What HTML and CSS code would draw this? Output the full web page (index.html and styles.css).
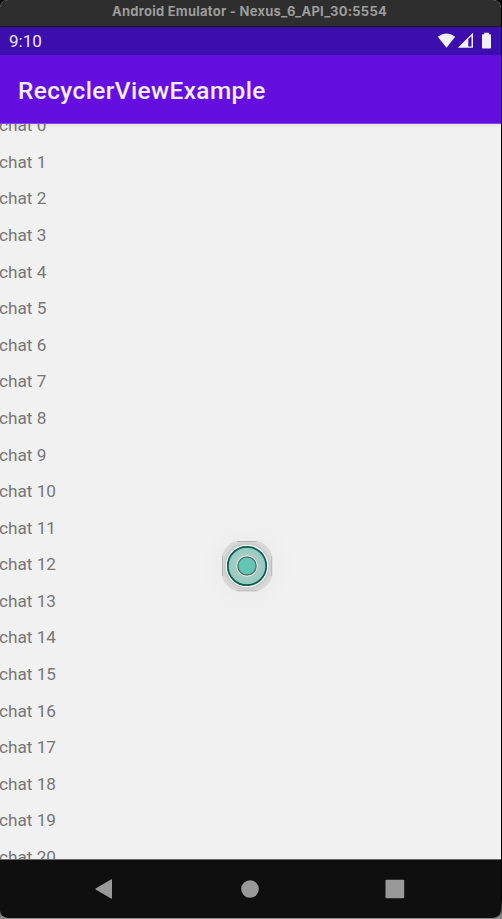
FILE: index.html
```
<!DOCTYPE html>
<html lang="en">

<head>
    <meta charset="UTF-8">
    <meta name="viewport" content="width=device-width, initial-scale=1.0">
    <title>RecyclerViewExample</title>
    <link rel="stylesheet" href="styles.css">
</head>

<body>
    <div class="emulator">
        <div class="window-title">Android Emulator - Nexus_6_API_30:5554</div>
        <div class="status-bar">
            <span class="clock">9:10</span>
            <svg class="status-icons" width="56" height="18" viewBox="0 0 56 18">
                <path fill="#f1f0f5" d="M0.8 4.8 Q9.5 -2 18.2 4.8 L9.5 15.7 Z" />
                <path fill="#f1f0f5" fill-rule="evenodd" d="M20.8 15.8 L36 0.8 V15.8 Z M31.3 7 V14.5 H34.5 V4.2 Z" />
                <path fill="#f1f0f5" d="M47.2 0.7 H52 V2.2 H53 Q54 2.2 54 3.2 V15.4 Q54 16.5 53 16.5 H46 Q45 16.5 45 15.4 V3.2 Q45 2.2 46 2.2 H47.2 Z" />
            </svg>
        </div>
        <h1 class="app-bar">RecyclerViewExample</h1>
        <div class="recycler">
            <ul class="chat-list">
                <li>chat 0</li>
                <li>chat 1</li>
                <li>chat 2</li>
                <li>chat 3</li>
                <li>chat 4</li>
                <li>chat 5</li>
                <li>chat 6</li>
                <li>chat 7</li>
                <li>chat 8</li>
                <li>chat 9</li>
                <li>chat 10</li>
                <li>chat 11</li>
                <li>chat 12</li>
                <li>chat 13</li>
                <li>chat 14</li>
                <li>chat 15</li>
                <li>chat 16</li>
                <li>chat 17</li>
                <li>chat 18</li>
                <li>chat 19</li>
                <li>chat 20</li>
            </ul>
        </div>
        <div class="nav-bar">
            <svg width="20" height="22" viewBox="0 0 20 22">
                <path fill="#999" d="M1.6 10.4 Q1 11 1.6 11.6 L17 20.6 Q18 21 18 20 V2 Q18 1 17 1.4 Z" />
            </svg>
            <svg width="18" height="18" viewBox="0 0 18 18">
                <circle fill="#999" cx="9" cy="9" r="8.8" />
            </svg>
            <svg width="20" height="20" viewBox="0 0 20 20">
                <rect fill="#999" x="0.5" y="0.8" width="18.7" height="18.5" rx="1" />
            </svg>
        </div>
        <!-- touch pointer over the list -->
        <svg class="pointer" width="120" height="120" viewBox="0 0 120 120">
            <defs>
                <radialGradient id="halo">
                    <stop offset="0.4" stop-color="#000" stop-opacity="0.02" />
                    <stop offset="1" stop-color="#000" stop-opacity="0" />
                </radialGradient>
                <radialGradient id="shade">
                    <stop offset="0.75" stop-color="#bababa" />
                    <stop offset="1" stop-color="#d8d8d8" />
                </radialGradient>
                <radialGradient id="ring">
                    <stop offset="0.4" stop-color="#b4cbc6" />
                    <stop offset="1" stop-color="#8dcbbd" />
                </radialGradient>
            </defs>
            <circle cx="60" cy="61" r="48" fill="url(#halo)" />
            <path fill="url(#shade)" d="M49 35.3 H71 Q75 35.8 79.6 40.4 Q84.2 45 84.7 49 V71 Q84.2 75 79.6 79.6 Q75 84.2 71 84.8 H49 Q45 84.2 40.4 79.6 Q35.8 75 35.3 71 V49 Q35.8 45 40.4 40.4 Q45 35.8 49 35.3 Z" />
            <path stroke="#a9a9a9" stroke-width="0.8" d="M50 35.5 H70 M50 84.8 H70 M35.5 50 V70 M84.7 50 V70" />
            <circle cx="60" cy="60" r="20" fill="url(#ring)" />
            <circle cx="60" cy="60" r="20.7" fill="none" stroke="#fff" stroke-width="1.2" />
            <circle cx="60" cy="60" r="19.2" fill="none" stroke="#075d50" stroke-width="1.7" />
            <circle cx="60" cy="60" r="10.5" fill="#fff" />
            <circle cx="60" cy="60" r="9.1" fill="#63c6b4" stroke="#497870" stroke-width="1.5" />
        </svg>
    </div>
</body>

</html>
```
FILE: styles.css
```
body {
    margin: 0;
    background: linear-gradient(#000 900px, #8c8c8c 918px);
    font-family: Roboto, sans-serif;
}

.emulator {
    position: relative;
    display: flex;
    flex-direction: column;
    width: 501px;
    height: 918px;
    overflow: hidden;
    border-radius: 8px;
    background-color: #f1f1f1;
    border-bottom: 1px solid #8c8c8c;
}

.window-title {
    box-sizing: border-box;
    height: 27px;
    border-bottom: 1px solid #151515;
    background-color: #2e2e2e;
    color: #9c9c9c;
    font: bold 13px/23px Inter, sans-serif;
    letter-spacing: 0.25px;
    text-align: center;
    padding-right: 2px;
}

.status-bar {
    display: flex;
    justify-content: space-between;
    align-items: center;
    height: 28px;
    padding: 0 8px 0 9px;
    background-color: #3d0eae;
}

.clock {
    color: #ebe7f6;
    font-size: 17px;
}

.app-bar {
    position: relative;
    box-sizing: border-box;
    height: 69px;
    margin: 0;
    padding-left: 18px;
    border-bottom: 1px solid #8146dd;
    background-color: #640fe0;
    box-shadow: 0 1px 4px rgba(0, 0, 0, 0.1);
    color: #f3eefb;
    font-size: 24.4px;
    font-weight: 500;
    letter-spacing: 0.4px;
    line-height: 71px;
    z-index: 1;
}

.recycler {
    flex: 1;
    overflow: hidden;
    border-bottom: 1px solid #696969;
}

.chat-list {
    margin: -16.7px 0 0 -1px;
    padding: 0;
    list-style: none;
    color: #777;
    font-size: 17.2px;
    line-height: 36.58px;
}

.nav-bar {
    display: flex;
    justify-content: space-between;
    align-items: center;
    height: 58px;
    padding: 0 96px 0 94px;
    background-color: #0f0f0f;
}

.pointer {
    position: absolute;
    left: 187px;
    top: 506px;
}
```
